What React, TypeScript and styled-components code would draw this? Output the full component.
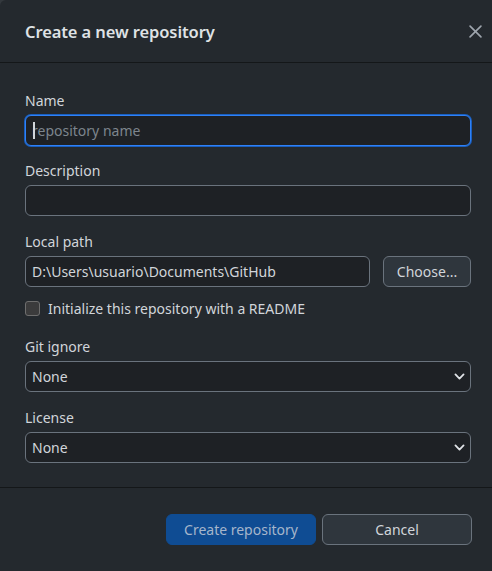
import React from "react";
import styled, { createGlobalStyle } from "styled-components";

const GlobalStyle = createGlobalStyle`
  html, body {
    margin: 0;
    padding: 0;
    background: #33383d;
  }
  * {
    box-sizing: border-box;
  }
`;

const Dialog = styled.div`
  width: 492px;
  height: 571px;
  background: #24292e;
  border-top-left-radius: 6px;
  display: flex;
  flex-direction: column;
  font-family: "Noto Sans", "Open Sans", sans-serif;
  color: #d1d5da;
  overflow: hidden;
`;

const Header = styled.div`
  height: 63px;
  flex: 0 0 63px;
  display: flex;
  align-items: center;
  justify-content: space-between;
  padding: 0 2px 0 25px;
  border-bottom: 1px solid #141719;
`;

const Title = styled.h1`
  margin: 0;
  font-size: 16.5px;
  font-weight: 600;
  color: #dfe2e5;
  letter-spacing: -0.1px;
`;

const CloseButton = styled.button`
  width: 30px;
  height: 30px;
  background: none;
  border: none;
  padding: 0;
  display: flex;
  align-items: center;
  justify-content: center;
  color: #9ea5ad;
  cursor: pointer;
`;

const Body = styled.div`
  flex: 1 1 auto;
  padding: 28px 21px 0 25px;
  display: flex;
  flex-direction: column;
  border-bottom: 1px solid #141719;
`;

const Field = styled.div<{ $gap?: number }>`
  display: flex;
  flex-direction: column;
  gap: 4px;
  margin-bottom: ${(p) => p.$gap ?? 15}px;
`;

const Label = styled.label`
  font-size: 14px;
  line-height: 20px;
  color: #d1d5da;
`;

const InputWrap = styled.div`
  position: relative;
  flex: 1 1 auto;
  display: flex;
`;

const TextInput = styled.input<{ $focused?: boolean }>`
  width: 100%;
  height: 31px;
  background: #1e2125;
  border: 1px solid ${(p) => (p.$focused ? "#2f81f7" : "#6a737d")};
  box-shadow: ${(p) => (p.$focused ? "0 0 0 1px #1a5fbf" : "none")};
  border-radius: 6px;
  padding: 0 6px;
  font-family: inherit;
  font-size: 14px;
  color: #d1d5da;
  outline: none;
  &::placeholder {
    color: #7d858d;
  }
`;

const Caret = styled.span`
  position: absolute;
  left: 8px;
  top: 7px;
  width: 1.5px;
  height: 17px;
  background: #d1d5da;
`;

const PathRow = styled.div`
  display: flex;
  gap: 13px;
`;

const Button = styled.button<{ $primary?: boolean }>`
  height: 31px;
  border-radius: 6px;
  font-family: inherit;
  font-size: 14px;
  cursor: pointer;
  background: ${(p) => (p.$primary ? "#0f4c93" : "#2f363d")};
  border: 1px solid ${(p) => (p.$primary ? "#0f4c93" : "#6a737d")};
  color: ${(p) => (p.$primary ? "#a6b6cb" : "#d1d5da")};
  padding: 0 12px;
`;

const ChooseButton = styled(Button)`
  width: 88px;
  flex: 0 0 88px;
`;

const CheckRow = styled.label`
  display: flex;
  align-items: center;
  gap: 8px;
  font-size: 14px;
  color: #d1d5da;
  margin: -3px 0 19px;
  height: 20px;
`;

const CheckBox = styled.span`
  width: 15px;
  height: 15px;
  border-radius: 3px;
  background: #3b3b3c;
  border: 1px solid #6e6e6e;
`;

const SelectBox = styled.div`
  position: relative;
  height: 31px;
  background: #1e2125;
  border: 1px solid #6a737d;
  border-radius: 6px;
  padding: 0 6px;
  display: flex;
  align-items: center;
  justify-content: space-between;
  font-size: 14px;
  color: #d1d5da;
`;

const Chevron = styled.svg`
  width: 13px;
  height: 13px;
  margin-right: -2px;
  color: #e1e4e8;
`;

const Footer = styled.div`
  flex: 0 0 83px;
  display: flex;
  justify-content: flex-end;
  align-items: center;
  gap: 6px;
  padding: 0 20px 0 0;
`;

const FooterButton = styled(Button)`
  width: 150px;
`;

function ChevronDown() {
  return (
    <Chevron viewBox="0 0 16 16" fill="none">
      <path
        d="M3 5.5l5 5 5-5"
        stroke="currentColor"
        strokeWidth="2.2"
        strokeLinecap="round"
        strokeLinejoin="round"
      />
    </Chevron>
  );
}

export default function App() {
  return (
    <>
      <GlobalStyle />
      <Dialog>
        <Header>
          <Title>Create a new repository</Title>
          <CloseButton aria-label="Close">
            <svg width="13" height="13" viewBox="0 0 12 12">
              <path
                d="M1 1l10 10M11 1L1 11"
                stroke="currentColor"
                strokeWidth="1.5"
                strokeLinecap="round"
              />
            </svg>
          </CloseButton>
        </Header>
        <Body>
          <Field>
            <Label>Name</Label>
            <InputWrap>
              <TextInput $focused placeholder="repository name" />
              <Caret />
            </InputWrap>
          </Field>
          <Field $gap={16}>
            <Label>Description</Label>
            <TextInput />
          </Field>
          <Field $gap={14}>
            <Label>Local path</Label>
            <PathRow>
              <InputWrap>
                <TextInput defaultValue="D:\Users\usuario\Documents\GitHub" />
              </InputWrap>
              <ChooseButton>Choose...</ChooseButton>
            </PathRow>
          </Field>
          <CheckRow>
            <CheckBox />
            Initialize this repository with a README
          </CheckRow>
          <Field $gap={16}>
            <Label>Git ignore</Label>
            <SelectBox>
              None
              <ChevronDown />
            </SelectBox>
          </Field>
          <Field>
            <Label>License</Label>
            <SelectBox>
              None
              <ChevronDown />
            </SelectBox>
          </Field>
        </Body>
        <Footer>
          <FooterButton $primary>Create repository</FooterButton>
          <FooterButton>Cancel</FooterButton>
        </Footer>
      </Dialog>
    </>
  );
}
